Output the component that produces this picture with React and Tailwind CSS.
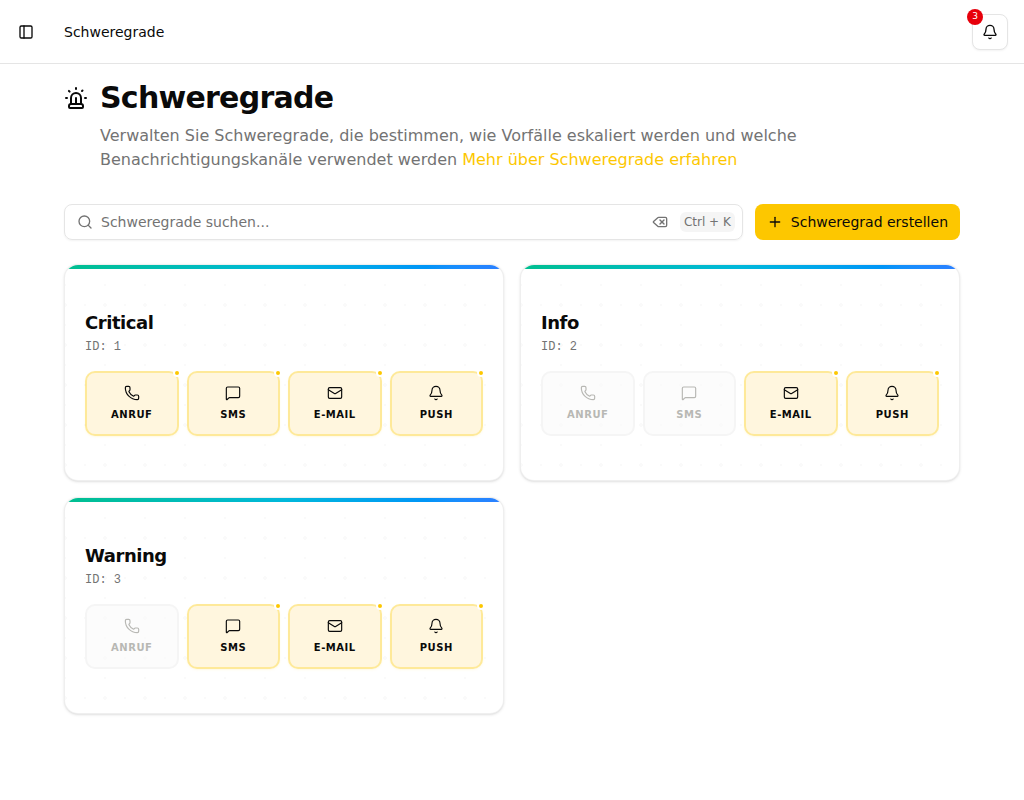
import { Bell, Delete, Mail, MessageSquare, PanelLeft, Phone, Plus, Search, Siren } from 'lucide-react'

const channels = [
  { key: 'call', label: 'Anruf', icon: Phone },
  { key: 'sms', label: 'SMS', icon: MessageSquare },
  { key: 'email', label: 'E-Mail', icon: Mail },
  { key: 'push', label: 'Push', icon: Bell },
]

const severities = [
  { id: 1, name: 'Critical', enabled: ['call', 'sms', 'email', 'push'] },
  { id: 2, name: 'Info', enabled: ['email', 'push'] },
  { id: 3, name: 'Warning', enabled: ['sms', 'email', 'push'] },
]

function Header() {
  return (
    <header className="flex h-16 items-center justify-between border-b border-neutral-200 px-4">
      <div className="flex items-center gap-7">
        <button type="button" aria-label="Seitenleiste umschalten" className="flex size-5 items-center justify-center">
          <PanelLeft size={16} />
        </button>
        <nav className="text-sm">Schweregrade</nav>
      </div>
      <button
        type="button"
        aria-label="Benachrichtigungen"
        className="relative flex size-9 items-center justify-center rounded-lg border border-neutral-200 bg-white shadow-xs"
      >
        <Bell size={16} />
        <span className="absolute -top-1.5 -left-1.5 flex size-4 justify-center rounded-full bg-red-600 text-[9px] leading-[14px] text-white">
          3
        </span>
      </button>
    </header>
  )
}

function Channel({ label, icon: Icon, active }) {
  return (
    <li
      className={
        active
          ? 'relative flex flex-col items-center gap-1.5 rounded-[10px] border-2 border-yellow-400/40 bg-[#fff6dc]/95 bg-clip-padding p-3 shadow-xs shadow-yellow-400/10'
          : 'relative flex flex-col items-center gap-1.5 rounded-[10px] border-2 border-neutral-100 bg-neutral-50/60 p-3 text-[#b8b8b4]'
      }
    >
      <Icon size={16} strokeWidth={1.75} />
      <span className="text-[10px] leading-[15px] font-bold tracking-wider uppercase">{label}</span>
      {active && <span className="absolute -top-1 -right-1 size-2 rounded-full border-2 border-white bg-yellow-400" />}
    </li>
  )
}

function SeverityCard({ id, name, enabled }) {
  return (
    <article className="relative overflow-hidden rounded-[14px] border border-neutral-200/60 bg-white px-5 py-11 shadow-sm">
      <div className="absolute inset-0 bg-[radial-gradient(circle_at_20px_20px,#fafafa_2px,transparent_2px),radial-gradient(circle_at_20px_20px,#fafafa_1px,transparent_1px),radial-gradient(circle_at_20px_20px,#fafafa_1px,transparent_1px)] bg-size-[40px_40px] bg-position-[20px_20px,0px_20px,20px_0px]" />
      <div className="absolute inset-x-0 top-0 h-1 bg-linear-to-r from-[#00bf8f] via-cyan-500 to-blue-500" />
      <div className="relative">
        <h2 className="text-lg leading-7 font-bold tracking-tight">{name}</h2>
        <p className="pt-px font-['Liberation_Mono',monospace] text-xs leading-[18px] text-neutral-500">ID: {id}</p>
        <ul className="mt-[15px] grid grid-cols-4 gap-2">
          {channels.map((c) => (
            <Channel key={c.key} label={c.label} icon={c.icon} active={enabled.includes(c.key)} />
          ))}
        </ul>
      </div>
    </article>
  )
}

function App() {
  return (
    <div className="min-h-screen bg-white font-['DejaVu_Sans',sans-serif] text-neutral-950">
      <Header />
      <main className="px-16 pt-4 pb-8">
        <div className="flex items-center gap-3">
          <Siren size={24} />
          <h1 className="text-3xl leading-9 font-bold tracking-tight">Schweregrade</h1>
        </div>
        <p className="mt-2 ml-9 text-base text-neutral-500">
          Verwalten Sie Schweregrade, die bestimmen, wie Vorfälle eskaliert werden und welche
          Benachrichtigungskanäle verwendet werden{' '}
          <a href="#" className="text-yellow-400">Mehr über Schweregrade erfahren</a>
        </p>

        <div className="mt-8 flex gap-3">
          <div className="flex h-9 flex-1 items-center gap-2 rounded-lg border border-neutral-200 pr-[7px] pl-3 text-neutral-500 shadow-xs">
            <Search size={16} />
            <input
              type="text"
              aria-label="Schweregrade suchen"
              placeholder="Schweregrade suchen..."
              className="min-w-0 flex-1 text-sm outline-none placeholder:text-neutral-500"
            />
            <button type="button" aria-label="Suche leeren">
              <Delete size={16} />
            </button>
            <kbd className="ml-1 rounded-md bg-neutral-100 px-1 font-['DejaVu_Sans',sans-serif] text-xs leading-5">
              Ctrl + K
            </kbd>
          </div>
          <button type="button" className="flex h-9 items-center gap-2 rounded-lg bg-yellow-400 px-3 text-sm">
            <Plus size={16} />
            Schweregrad erstellen
          </button>
        </div>

        <div className="mt-6 grid grid-cols-2 gap-4">
          {severities.map((s) => (
            <SeverityCard key={s.id} {...s} />
          ))}
        </div>
      </main>
    </div>
  )
}

export default App
